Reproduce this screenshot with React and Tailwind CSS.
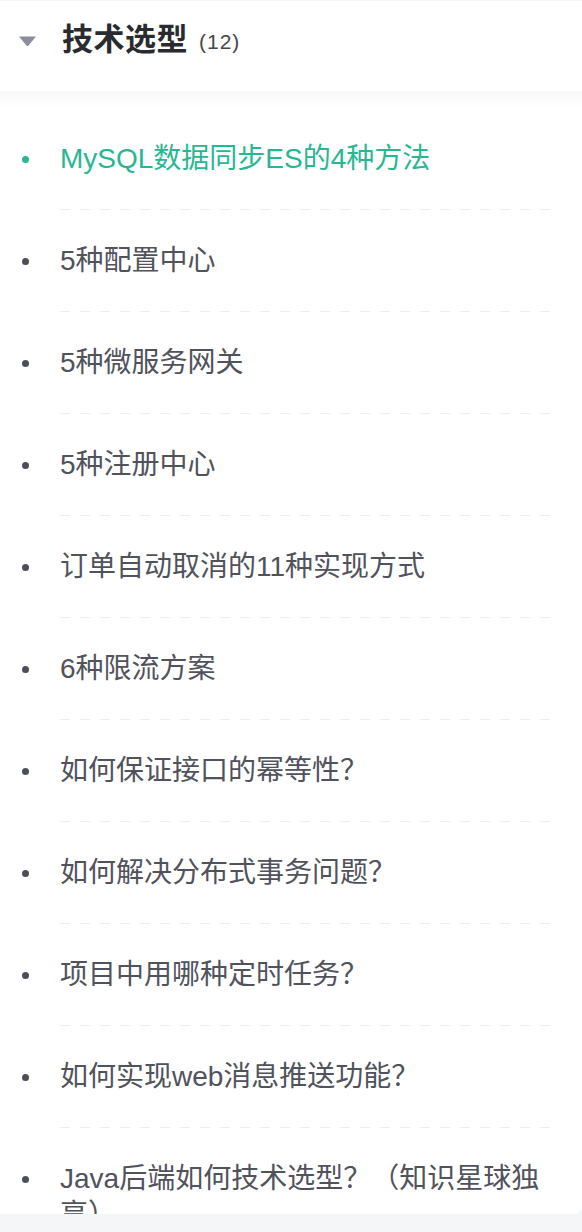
const items = [
  'MySQL数据同步ES的4种方法',
  '5种配置中心',
  '5种微服务网关',
  '5种注册中心',
  '订单自动取消的11种实现方式',
  '6种限流方案',
  '如何保证接口的幂等性？',
  '如何解决分布式事务问题？',
  '项目中用哪种定时任务？',
  '如何实现web消息推送功能？',
  'Java后端如何技术选型？（知识星球独享）',
  '技术选型总结',
];

const font = { fontFamily: '"Liberation Sans", "Noto Sans CJK SC", sans-serif' };

function Item({ title, active }) {
  return (
    <div className="flex">
      <div className="w-[60px] shrink-0 pt-[33px] pl-[22px]">
        <div className="h-[36px] flex items-center">
          <span className={`block w-[7px] h-[7px] rounded-full ${active ? 'bg-[#27b793]' : 'bg-[#4d4f58]'}`} />
        </div>
      </div>
      <div className="w-[490px]">
        <div
          className={`pt-[33px] pb-[32px] text-[28px] leading-[36px] ${
            active ? 'text-[#27b793]' : 'text-[#50525c]'
          }`}
        >
          {title}
        </div>
        <div className="h-px bg-[linear-gradient(to_right,#efefef_50%,transparent_50%)] bg-[length:20px_1px]" />
      </div>
    </div>
  );
}

export default function App() {
  return (
    <div className="w-[582px] h-[1232px] bg-[#f5f6f8]" style={font}>
      <div className="h-[1214px] bg-white rounded-br-[8px] overflow-hidden">
        <div className="h-[91px] flex items-center pl-[18px] pb-[11px] border-t border-[#f6f8f7]">
          <svg width="19" height="10" viewBox="0 0 19 10" className="shrink-0">
            <path d="M1 0.5 H18 L10.5 9.5 Q9.5 10.5 8.5 9.5 Z" fill="#8b8d9a" />
          </svg>
          <span className="ml-[25px] text-[31px] font-bold tracking-[0.5px] text-[#2a2b2f]">技术选型</span>
          <span className="ml-[11px] text-[21px] tracking-[1px] text-[#45464c] pt-[3px]">(12)</span>
        </div>
        <div className="h-[17px] bg-gradient-to-b from-[#f8f8f8] to-white" />
        {items.map((t, i) => (
          <Item key={i} title={t} active={i === 0} />
        ))}
      </div>
    </div>
  );
}
